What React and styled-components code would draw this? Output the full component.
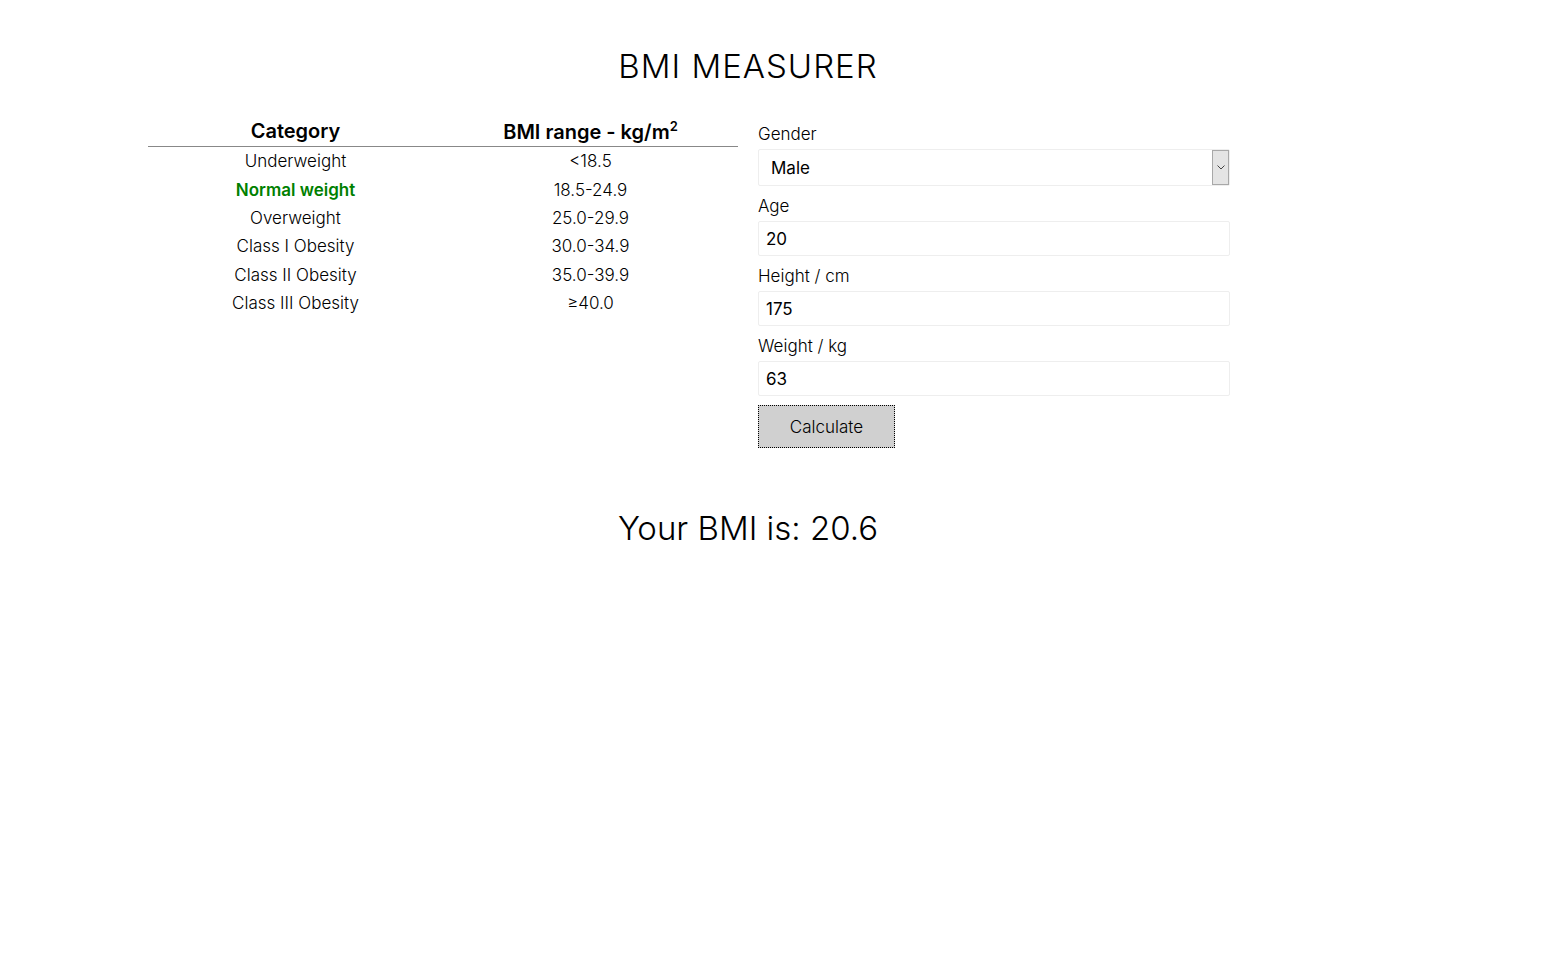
import React, { useState } from "react";
import styled, { createGlobalStyle } from "styled-components";

const GlobalStyle = createGlobalStyle`
  html, body {
    margin: 0;
    padding: 0;
    background: #fff;
  }
  body {
    font-family: Inter, "Liberation Sans", sans-serif;
    font-weight: 300;
    color: #000;
  }
`;

const Wrapper = styled.div`
  width: 1200px;
  margin-left: 148px;
  padding-top: 44px;
`;

const Title = styled.h1`
  margin: 0;
  text-align: center;
  font-size: 33px;
  font-weight: 300;
  line-height: 44px;
  letter-spacing: 1px;
`;

const Content = styled.div`
  display: flex;
  gap: 20px;
  margin-top: 27px;
`;

const Table = styled.table`
  width: 590px;
  border-collapse: collapse;
  align-self: flex-start;
`;

const HeadCell = styled.th`
  width: 50%;
  font-size: 20px;
  font-weight: 600;
  height: 31px;
  padding: 0;
  border-bottom: 1px solid #888;
  vertical-align: middle;
`;

const Cell = styled.td`
  text-align: center;
  font-size: 17px;
  height: 28.4px;
  padding: 0;
  color: ${(p) => (p.$active ? "#008000" : "#000")};
  font-weight: ${(p) => (p.$active ? 600 : 300)};
`;

const Form = styled.form`
  width: 472px;
  display: flex;
  flex-direction: column;
`;

const Label = styled.label`
  font-size: 17px;
  line-height: 20px;
  padding-top: ${(p) => (p.$first ? "9px" : "10px")};
  margin-bottom: 5px;
`;

const SelectBox = styled.div`
  position: relative;
  height: 37px;
`;

const Select = styled.select`
  appearance: none;
  width: 100%;
  height: 37px;
  box-sizing: border-box;
  border: 1px solid #eee;
  border-radius: 2px;
  background: #fff;
  padding: 0 12px;
  font-family: inherit;
  font-size: 17px;
  font-weight: 400;
  color: #000;
  outline: none;
`;

const Arrow = styled.span`
  position: absolute;
  top: 1px;
  right: 1px;
  width: 17px;
  height: 35px;
  box-sizing: border-box;
  background: #e4e4e4;
  border: 1px solid #a8a8a8;
  display: flex;
  align-items: center;
  justify-content: center;
  pointer-events: none;
`;

const Input = styled.input`
  width: 100%;
  height: 35px;
  box-sizing: border-box;
  border: 1px solid #eee;
  border-radius: 2px;
  padding: 0 7px;
  font-family: inherit;
  font-size: 17px;
  font-weight: 400;
  color: #000;
  outline: none;
`;

const Button = styled.button`
  align-self: flex-start;
  margin-top: 9px;
  width: 137px;
  height: 43px;
  box-sizing: border-box;
  background: #d0d0d0;
  border: 1px dotted #000;
  font-family: inherit;
  font-size: 17px;
  font-weight: 300;
  color: #000;
  cursor: pointer;
`;

const Result = styled.h2`
  margin: 58px 0 0;
  text-align: center;
  font-size: 33px;
  font-weight: 300;
  line-height: 44px;
`;

const ranges = [
  ["Underweight", "<18.5"],
  ["Normal weight", "18.5-24.9"],
  ["Overweight", "25.0-29.9"],
  ["Class I Obesity", "30.0-34.9"],
  ["Class II Obesity", "35.0-39.9"],
  ["Class III Obesity", "\u226540.0"],
];

const App = () => {
  const [age, setAge] = useState("20");
  const [height, setHeight] = useState("175");
  const [weight, setWeight] = useState("63");
  const [gender, setGender] = useState("Male");

  const bmi = (Number(weight) / (Number(height) / 100) ** 2).toFixed(1);

  return (
    <>
      <GlobalStyle />
      <Wrapper>
        <Title>BMI MEASURER</Title>
        <Content>
          <Table>
            <thead>
              <tr>
                <HeadCell>Category</HeadCell>
                <HeadCell>
                  BMI range - kg/m<sup style={{ fontSize: "13px" }}>2</sup>
                </HeadCell>
              </tr>
            </thead>
            <tbody>
              {ranges.map(([name, range], i) => (
                <tr key={name}>
                  <Cell $active={i === 1}>{name}</Cell>
                  <Cell>{range}</Cell>
                </tr>
              ))}
            </tbody>
          </Table>
          <Form onSubmit={(e) => e.preventDefault()}>
            <Label $first>Gender</Label>
            <SelectBox>
              <Select value={gender} onChange={(e) => setGender(e.target.value)}>
                <option>Male</option>
                <option>Female</option>
              </Select>
              <Arrow>
                <svg width="8" height="5" viewBox="0 0 8 5">
                  <path d="M0.5 0.5l3.5 3.5 3.5-3.5" fill="none" stroke="#444" strokeWidth="1" />
                </svg>
              </Arrow>
            </SelectBox>
            <Label>Age</Label>
            <Input value={age} onChange={(e) => setAge(e.target.value)} />
            <Label>Height / cm</Label>
            <Input value={height} onChange={(e) => setHeight(e.target.value)} />
            <Label>Weight / kg</Label>
            <Input value={weight} onChange={(e) => setWeight(e.target.value)} />
            <Button type="submit">Calculate</Button>
          </Form>
        </Content>
        <Result>Your BMI is: {bmi}</Result>
      </Wrapper>
    </>
  );
};

export default App;
